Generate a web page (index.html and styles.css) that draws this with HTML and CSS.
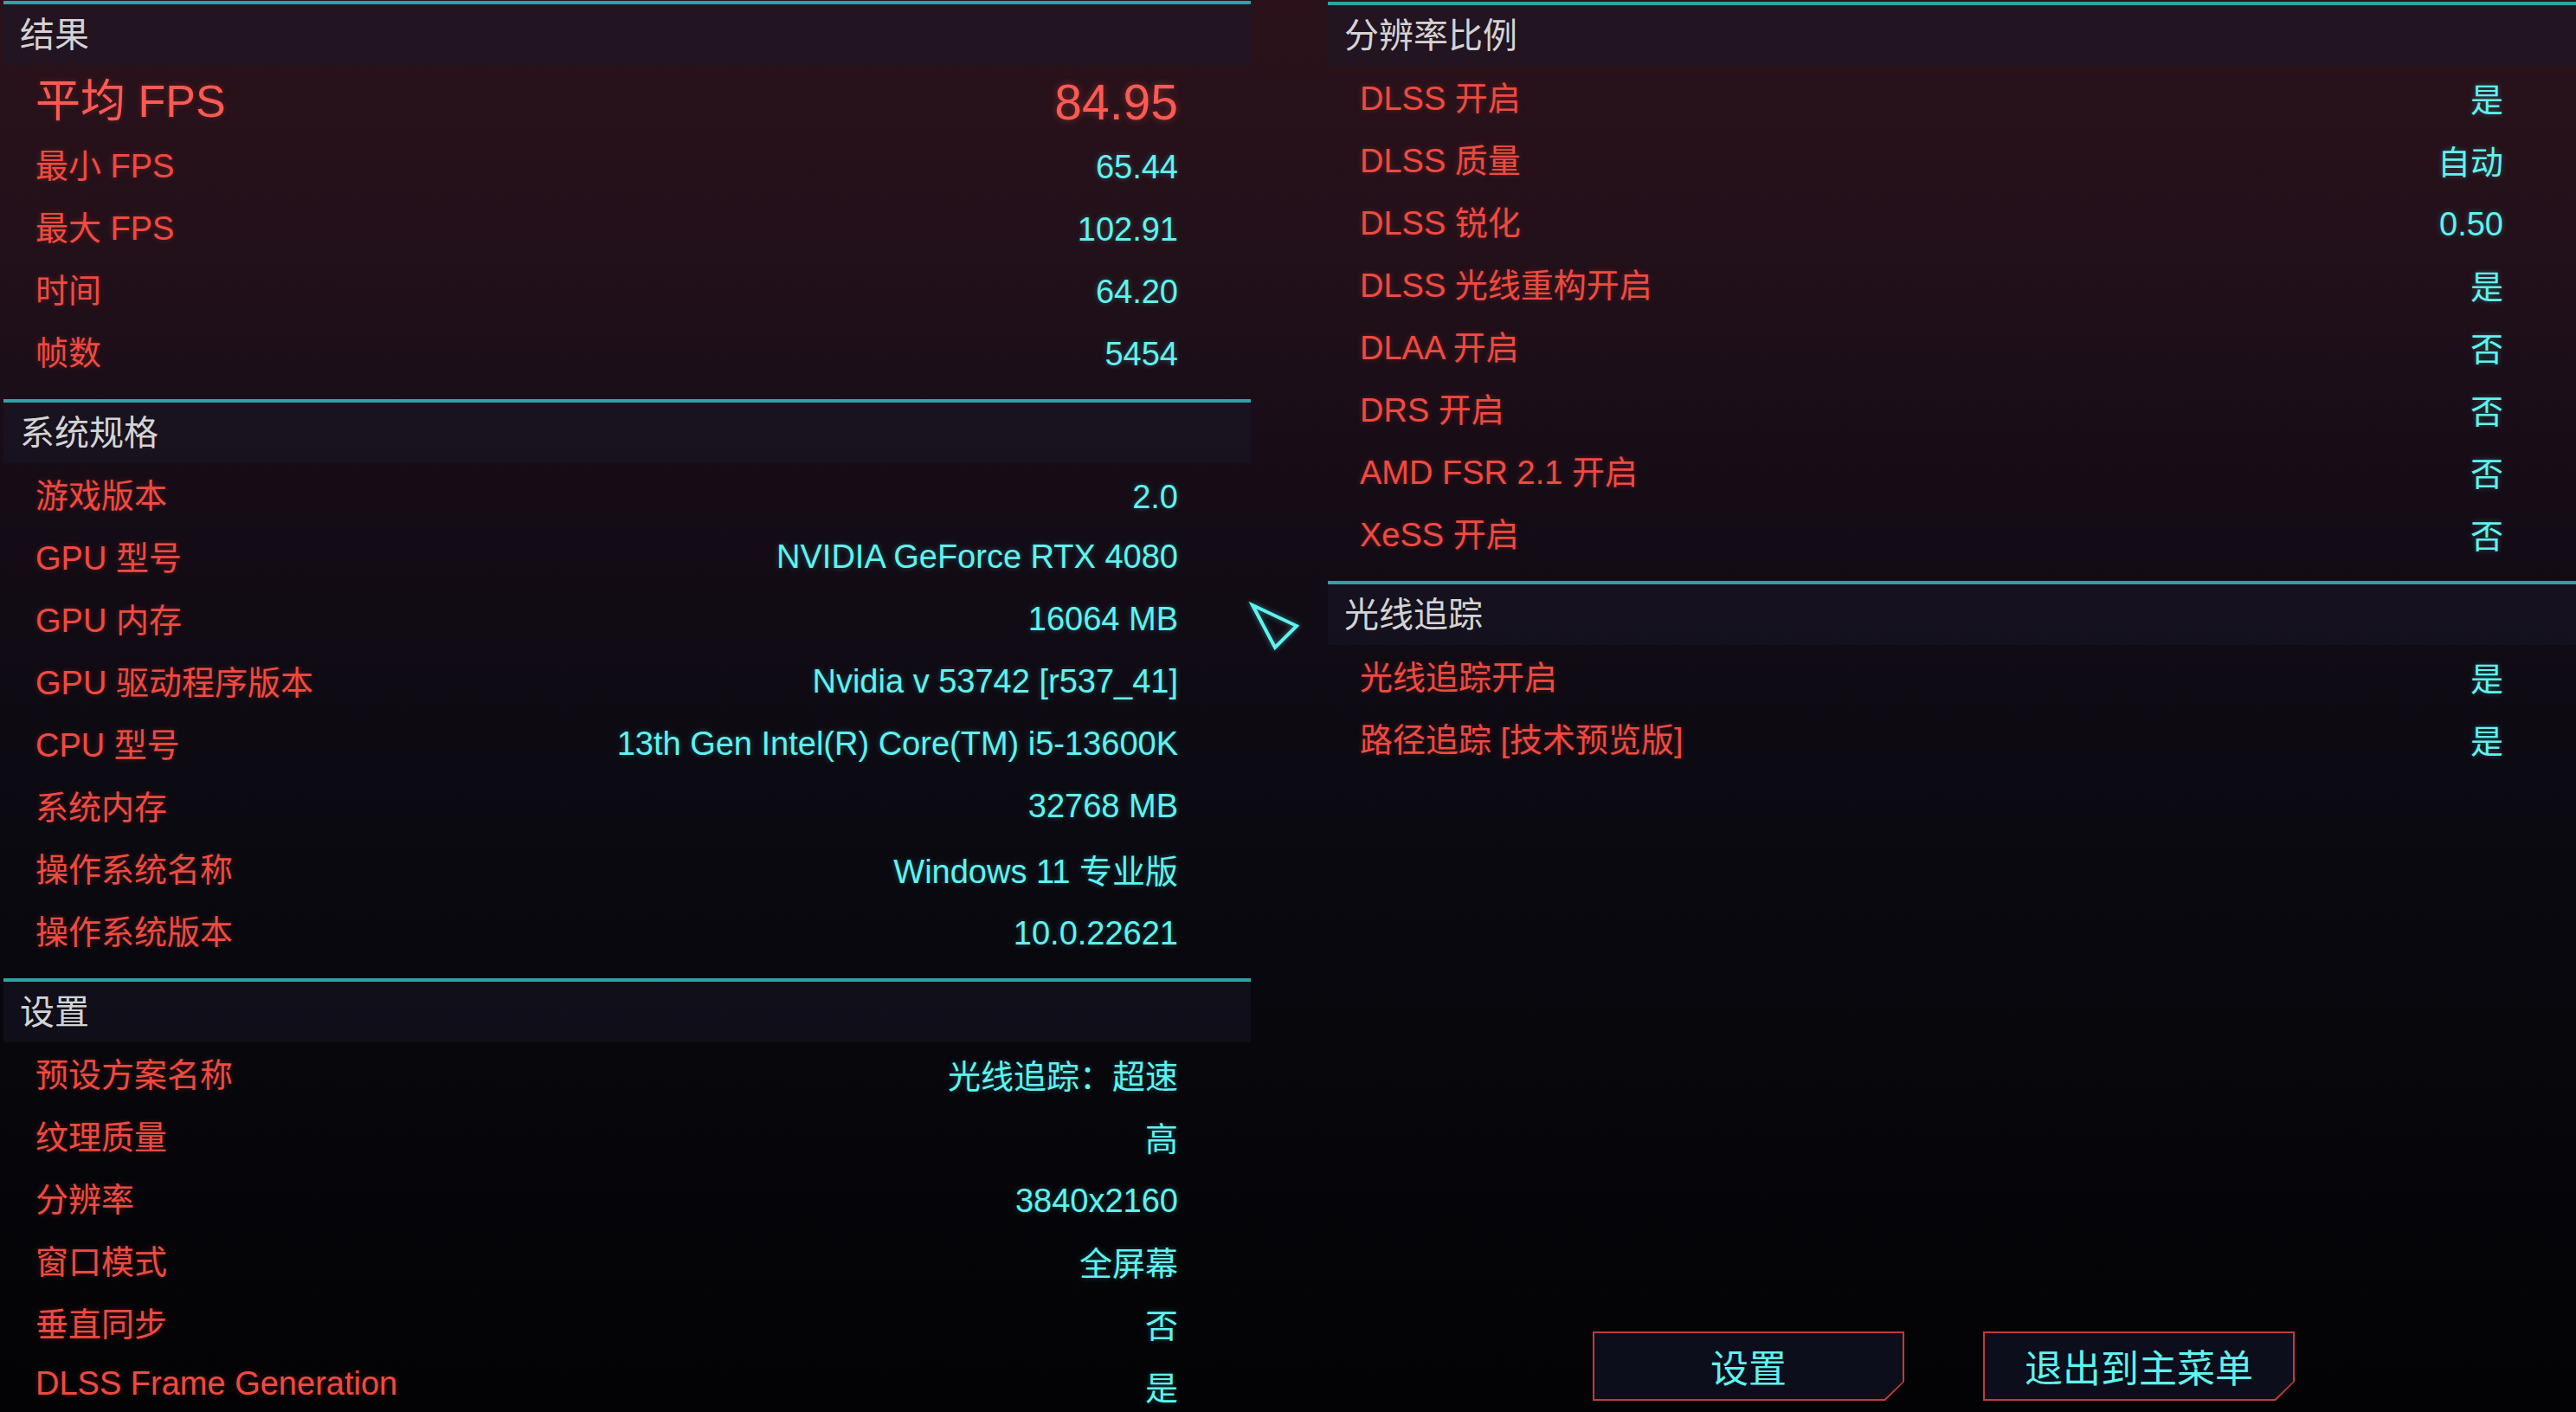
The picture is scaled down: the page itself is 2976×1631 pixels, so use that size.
FILE: index.html
```html
<!DOCTYPE html>
<html lang="zh-CN">
<head>
    <meta charset="utf-8">
    <title>基准测试结果</title>
    <link rel="stylesheet" href="styles.css">
</head>
<body>
    <div class="screen">
        <div class="panel panel-left">
            <section class="group">
                <div class="group-head">结果</div>
                <div class="group-rows rows-results">
                    <div class="row row-big"><span class="label">平均 FPS</span><span class="value">84.95</span></div>
                    <div class="row"><span class="label">最小 FPS</span><span class="value num">65.44</span></div>
                    <div class="row"><span class="label">最大 FPS</span><span class="value num">102.91</span></div>
                    <div class="row"><span class="label">时间</span><span class="value num">64.20</span></div>
                    <div class="row"><span class="label">帧数</span><span class="value num">5454</span></div>
                </div>
            </section>
            <section class="group">
                <div class="group-head">系统规格</div>
                <div class="group-rows">
                    <div class="row"><span class="label">游戏版本</span><span class="value num">2.0</span></div>
                    <div class="row"><span class="label">GPU 型号</span><span class="value">NVIDIA GeForce RTX 4080</span></div>
                    <div class="row"><span class="label">GPU 内存</span><span class="value">16064 MB</span></div>
                    <div class="row"><span class="label">GPU 驱动程序版本</span><span class="value">Nvidia v 53742 [r537_41]</span></div>
                    <div class="row"><span class="label">CPU 型号</span><span class="value">13th Gen Intel(R) Core(TM) i5-13600K</span></div>
                    <div class="row"><span class="label">系统内存</span><span class="value">32768 MB</span></div>
                    <div class="row"><span class="label">操作系统名称</span><span class="value">Windows 11 专业版</span></div>
                    <div class="row"><span class="label">操作系统版本</span><span class="value num">10.0.22621</span></div>
                </div>
            </section>
            <section class="group">
                <div class="group-head">设置</div>
                <div class="group-rows">
                    <div class="row"><span class="label">预设方案名称</span><span class="value">光线追踪：超速</span></div>
                    <div class="row"><span class="label">纹理质量</span><span class="value">高</span></div>
                    <div class="row"><span class="label">分辨率</span><span class="value num">3840x2160</span></div>
                    <div class="row"><span class="label">窗口模式</span><span class="value">全屏幕</span></div>
                    <div class="row"><span class="label">垂直同步</span><span class="value">否</span></div>
                    <div class="row"><span class="label">DLSS Frame Generation</span><span class="value">是</span></div>
                </div>
            </section>
        </div>

        <div class="gutter">
            <svg class="cursor" width="62" height="62" viewBox="0 0 62 62">
                <polygon points="5,5 56,29 31,54" fill="none" stroke="#5ff3f0" stroke-width="4" stroke-linejoin="miter"/>
            </svg>
        </div>

        <div class="panel panel-right">
            <section class="group">
                <div class="group-head">分辨率比例</div>
                <div class="group-rows">
                    <div class="row"><span class="label">DLSS 开启</span><span class="value">是</span></div>
                    <div class="row"><span class="label">DLSS 质量</span><span class="value">自动</span></div>
                    <div class="row"><span class="label">DLSS 锐化</span><span class="value num">0.50</span></div>
                    <div class="row"><span class="label">DLSS 光线重构开启</span><span class="value">是</span></div>
                    <div class="row"><span class="label">DLAA 开启</span><span class="value">否</span></div>
                    <div class="row"><span class="label">DRS 开启</span><span class="value">否</span></div>
                    <div class="row"><span class="label">AMD FSR 2.1 开启</span><span class="value">否</span></div>
                    <div class="row"><span class="label">XeSS 开启</span><span class="value">否</span></div>
                </div>
            </section>
            <section class="group">
                <div class="group-head">光线追踪</div>
                <div class="group-rows">
                    <div class="row"><span class="label">光线追踪开启</span><span class="value">是</span></div>
                    <div class="row"><span class="label">路径追踪 [技术预览版]</span><span class="value">是</span></div>
                </div>
            </section>

            <div class="actions">
                <button class="cut-btn"><span class="cut-btn-inner">设置</span></button>
                <button class="cut-btn"><span class="cut-btn-inner">退出到主菜单</span></button>
            </div>
        </div>
    </div>
</body>
</html>
```

FILE: styles.css
```css
body {
    margin: 0;
    padding: 0;
    width: 2976px;
    height: 1631px;
    overflow: hidden;
    color: #f04a40;
    font-family: "Liberation Sans", "Noto Sans CJK SC", sans-serif;
    background: linear-gradient(to bottom, #2b121a 0%, #22101a 18%, #150c16 35%, #0c0a12 55%, #07070c 75%, #030305 100%);
}

.screen {
    display: flex;
    height: 1631px;
    padding-top: 1px;
    box-sizing: border-box;
}

.panel {
    display: flex;
    flex-direction: column;
}

.panel-left {
    width: 1441px;
    margin-left: 4px;
}

.panel-right {
    flex: 1;
    padding-top: 1px;
}

.gutter {
    width: 89px;
    padding-top: 693px;
    box-sizing: border-box;
}

.cursor {
    display: block;
    margin-left: -3px;
    filter: drop-shadow(0 0 3px rgba(95, 243, 240, 0.45));
}

.group {
    border-top: 4px solid #2ea3a6;
    padding-bottom: 19px;
}

.group-head {
    height: 70px;
    line-height: 70px;
    padding-left: 19px;
    font-size: 40px;
    color: #d3d3d3;
    background-color: rgba(26, 24, 42, 0.45);
}

.rows-results {
    padding-top: 7px;
}

.row {
    display: flex;
    align-items: center;
    justify-content: space-between;
    height: 72px;
    padding: 0 84px 0 37px;
    font-size: 38px;
    white-space: nowrap;
}

.label {
    margin-bottom: 4px;
    color: #f04a40;
    text-shadow: 0 0 6px rgba(240, 74, 64, 0.3);
}

.value {
    color: #5ff3f0;
    text-shadow: 0 0 6px rgba(95, 243, 240, 0.3);
}

/* digits sit a little lower in the game font */
.value.num {
    margin-top: 6px;
}

.row-big .label {
    margin-bottom: 12px;
    font-size: 52px;
    color: #ff5a52;
}

.row-big .value {
    font-size: 57px;
    color: #ff5a52;
    text-shadow: 0 0 8px rgba(255, 90, 82, 0.4);
}

.actions {
    display: flex;
    gap: 91px;
    margin-top: auto;
    padding-left: 306px;
    margin-bottom: 13px;
}

.cut-btn {
    display: block;
    width: 360px;
    height: 80px;
    padding: 2px;
    border: none;
    background-color: #c43b35;
    clip-path: polygon(0 0, 100% 0, 100% 58px, 338px 100%, 0 100%);
    font-family: "Noto Sans CJK SC", sans-serif;
    cursor: pointer;
}

.cut-btn-inner {
    display: flex;
    align-items: center;
    justify-content: center;
    width: 100%;
    height: 100%;
    background-color: #0d0e1b;
    clip-path: polygon(0 0, 100% 0, 100% 56px, 335px 100%, 0 100%);
    font-size: 44px;
    color: #5ff3f0;
}
```
